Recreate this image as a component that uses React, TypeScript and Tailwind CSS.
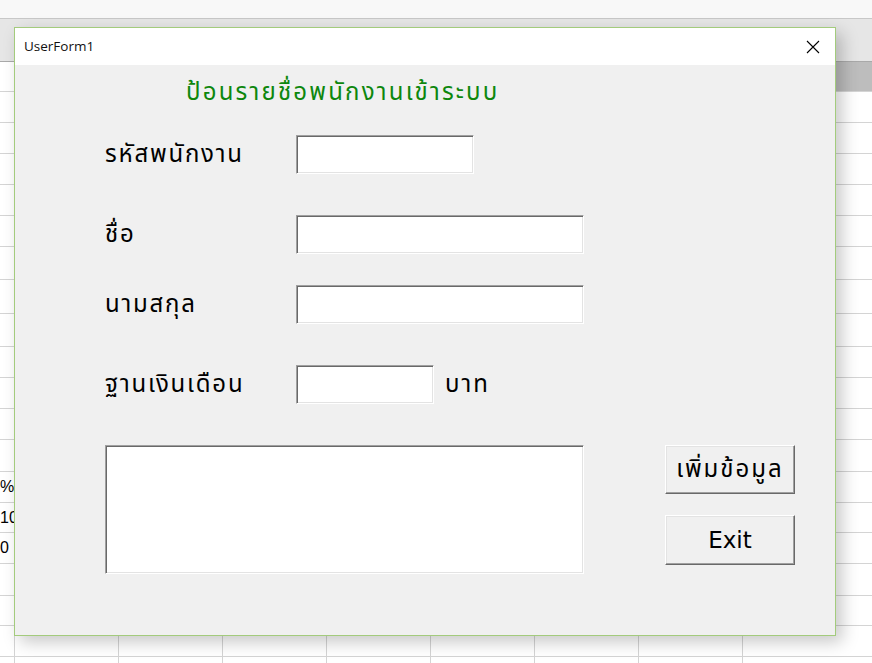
import React from 'react';

/* ── Excel sheet behind the form ── */
const rowEdges = [92, 123, 154, 185, 216, 247, 280, 314, 347, 378, 409, 440, 472, 503, 533, 564, 596, 626, 657, 690];
const cellText: Record<number, string> = { 12: '%', 13: '10', 14: '0' };

const Sheet: React.FC = () => (
  <div className="w-full h-full flex flex-col bg-white overflow-hidden">
    <div className="h-[19px] shrink-0 bg-[#f8f8f8] border-b border-[#c8c8c8]" />
    <div className="h-[43px] shrink-0 bg-[#e6e6e6] border-b border-[#a9a9a9]" />
    <div className="h-[30px] shrink-0 flex border-b border-[#d4d4d4]">
      <div className="w-[15px] bg-white" />
      <div className="flex-1 bg-[#bdbdbd]" />
    </div>
    {rowEdges.slice(1).map((end, i) => (
      <div
        key={end}
        className="shrink-0 flex border-b border-[#d4d4d4]"
        style={{ height: end - rowEdges[i] }}
      >
        <div className="w-[15px] shrink-0 border-r border-[#d4d4d4] flex items-center">
          {cellText[i] && (
            <span className="text-[16px] text-black font-['Liberation_Sans',sans-serif] whitespace-nowrap">
              {cellText[i]}
            </span>
          )}
        </div>
        {[0, 1, 2, 3, 4, 5, 6].map((c) => (
          <div key={c} className="w-[104px] shrink-0 border-r border-[#d4d4d4]" />
        ))}
        <div className="flex-1" />
      </div>
    ))}
  </div>
);

/* ── Win32 style controls ── */
const Sunken: React.FC<{ className?: string }> = ({ className = '' }) => (
  <div
    className={`bg-white border border-t-[#a0a0a0] border-l-[#a0a0a0] border-b-white border-r-white shadow-[inset_1px_1px_0_#696969,inset_-1px_-1px_0_#e3e3e3] ${className}`}
  />
);

const Button: React.FC<{ children: React.ReactNode; className?: string }> = ({ children, className = '' }) => (
  <div
    className={`w-[130px] flex items-center justify-center bg-[#f0f0f0] border border-t-white border-l-white border-b-[#696969] border-r-[#696969] shadow-[inset_-1px_-1px_0_#a0a0a0,inset_1px_1px_0_#e3e3e3] text-black ${className}`}
  >
    {children}
  </div>
);

const thai = "font-['Tahoma','Noto_Sans_Thai','Noto_Sans','DejaVu_Sans',sans-serif]";
const label = 'w-[191px] text-[24px] tracking-[1.8px] text-black whitespace-nowrap';

export default function App() {
  return (
    <div className="relative w-[872px] h-[663px] overflow-hidden bg-white">
      <Sheet />

      {/* ── UserForm1 window ── */}
      <div className="absolute left-[14px] top-[27px] w-[822px] h-[609px] flex flex-col border border-[#a3cb7c] bg-[#f0f0f0] shadow-[6px_6px_16px_rgba(0,0,0,0.22)]">
        <div className="h-[37px] shrink-0 bg-white flex items-center justify-between pl-[9px] pr-[15px]">
          <span className="text-[13.5px] text-[#111] font-['Open_Sans','Noto_Sans',sans-serif]">UserForm1</span>
          <svg width="14" height="14" viewBox="0 0 14 14" className="text-black">
            <path d="M1 1 L13 13 M13 1 L1 13" stroke="currentColor" strokeWidth="1.1" />
          </svg>
        </div>

        <div className={`flex-1 flex flex-col pl-[90px] ${thai}`}>
          <div className="mt-[12px] ml-[81px] h-[32px] leading-[32px] text-[24px] tracking-[2.2px] text-[#0d870d] whitespace-nowrap">
            ป้อนรายชื่อพนักงานเข้าระบบ
          </div>

          <div className="mt-[26px] flex items-center h-[39px]">
            <span className={label}>รหัสพนักงาน</span>
            <Sunken className="w-[178px] h-[39px]" />
          </div>

          <div className="mt-[41px] flex items-center h-[39px]">
            <span className={label}>ชื่อ</span>
            <Sunken className="w-[288px] h-[39px]" />
          </div>

          <div className="mt-[31px] flex items-center h-[39px]">
            <span className={label}>นามสกุล</span>
            <Sunken className="w-[288px] h-[39px]" />
          </div>

          <div className="mt-[41px] flex items-center h-[39px]">
            <span className={label}>ฐานเงินเดือน</span>
            <Sunken className="w-[138px] h-[39px]" />
            <span className="ml-[11px] text-[24px] tracking-[2px] text-black">บาท</span>
          </div>

          <div className="mt-[41px] flex items-start">
            <Sunken className="w-[479px] h-[129px]" />
            <div className="ml-[81px] flex flex-col gap-[21px]">
              <Button className="h-[49px] text-[24px] tracking-[2px]">เพิ่มข้อมูล</Button>
              <Button className="h-[50px] text-[23px] font-['DejaVu_Sans',sans-serif]">Exit</Button>
            </div>
          </div>
        </div>
      </div>
    </div>
  );
}
